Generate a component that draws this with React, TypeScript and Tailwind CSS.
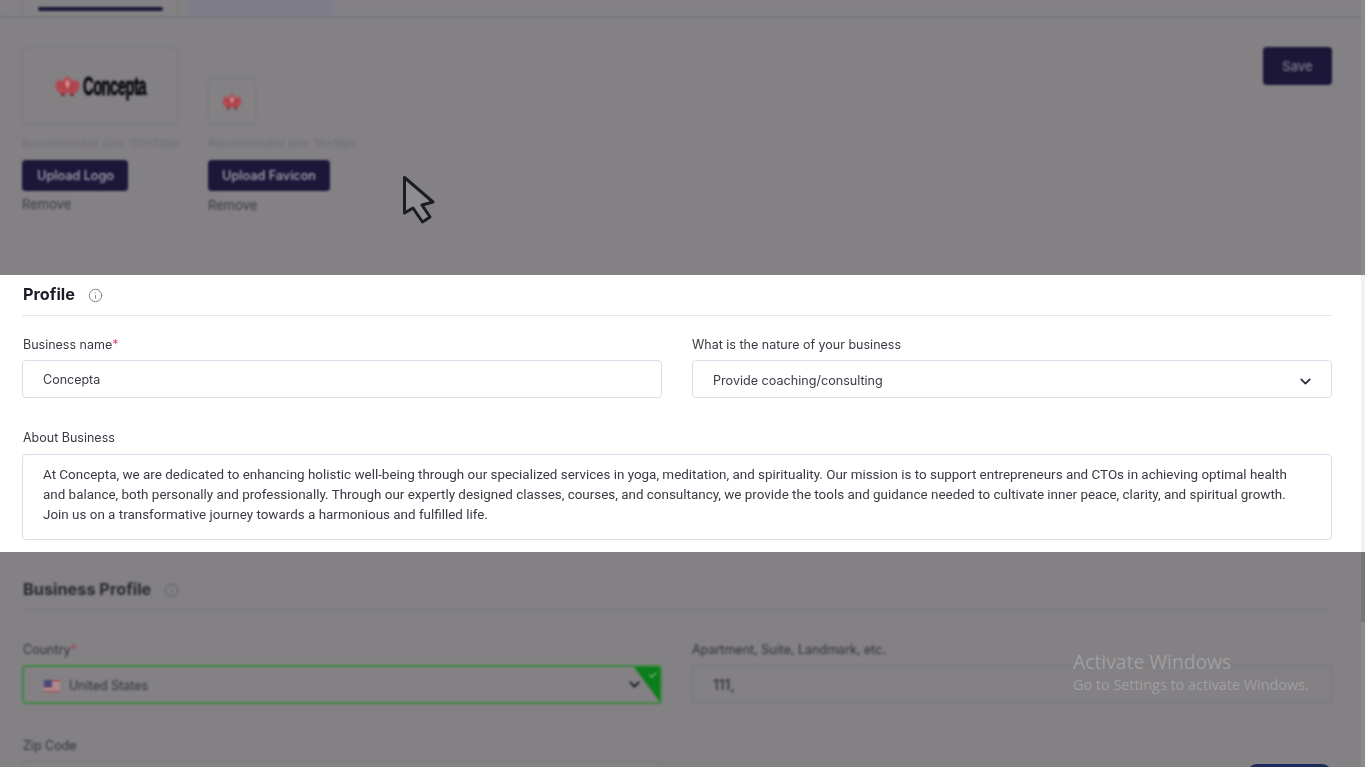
import { Info, ChevronDown, Check } from 'lucide-react'

const DIM = 'bg-[#838184]'

function Lotus({ className }: { className: string }) {
  return (
    <svg className={className} viewBox="0 0 28 24">
      <path d="M14 1 C17 3 18 5 19 7 L24 5 C26 7 27 10 27 13 C26 17 24 19 22 20 L6 20 C4 19 2 17 1 13 C1 10 2 7 4 5 L9 7 C10 5 11 3 14 1 Z" fill="#b4474f" />
      <path d="M14 4 L17 10 L14 15 L11 10 Z" fill="#d98a8e" />
      <path d="M5 10 L11 16 M23 10 L17 16 M8 7 L12 14 M20 7 L16 14" stroke="#8e3a42" strokeWidth="1" />
      <rect x="7" y="20" width="4" height="3" fill="#7a2c33" />
      <rect x="17" y="20" width="4" height="3" fill="#7a2c33" />
    </svg>
  )
}

function DimLabel({ children, star }: { children: string; star?: boolean }) {
  return (
    <div className="text-[12.5px] leading-4 text-[#333238]">
      {children}
      {star && <span className="text-[#a8404f]">*</span>}
    </div>
  )
}

export default function App() {
  return (
    <div className="relative flex h-[767px] w-full flex-col overflow-hidden bg-white font-['Inter',sans-serif]">
      {/* top, dimmed */}
      <section className={`${DIM} h-[275px] shrink-0`}>
        <div className="blur-[1px]">
          <div className="flex h-[18px] gap-[10px] border-b-2 border-[#79777a] pl-[22px]">
            <div className="flex w-[157px] items-end justify-center border-x border-[#79777a] pb-[5px]">
              <div className="h-[4px] w-[125px] rounded-full bg-[#1c1738]" />
            </div>
            <div className="w-[145px] bg-[#7e7e8a]" />
          </div>

          <div className="flex justify-between pl-[22px] pr-[33px] pt-[29px]">
            <div className="flex gap-[29px]">
              <div className="flex w-[157px] flex-col">
                <div className="flex h-[78px] items-center justify-center rounded border border-[#79777a] pr-[2px]">
                  <Lotus className="mr-[2px] h-[22px] w-[27px]" />
                  <div className="w-[63px]">
                    <div className="origin-left font-['Liberation_Sans',sans-serif] text-[26px] leading-none font-bold tracking-[-1px] whitespace-nowrap text-[#0c0b0e] [-webkit-text-stroke:0.8px_#0c0b0e] [transform:scaleX(0.57)]">
                      Concepta
                    </div>
                  </div>
                </div>
                <div className="mt-[12px] text-[10.8px] leading-[14px] whitespace-nowrap text-[#716f72]">
                  Recommended size: 150x50px
                </div>
                <button className="mt-[9px] h-[31px] w-[106px] rounded bg-[#1c1738] pl-[1px] text-[12.7px] font-medium text-[#a9a6b4]">
                  Upload Logo
                </button>
                <div className="mt-[5px] text-[13px] leading-4 text-[#3c3a3f]">Remove</div>
              </div>

              <div className="flex flex-col pt-[31px]">
                <div className="flex h-[47px] w-[48px] items-center justify-center rounded border border-[#79777a]">
                  <Lotus className="h-[17px] w-[20px]" />
                </div>
                <div className="mt-[12px] text-[10.8px] leading-[14px] whitespace-nowrap text-[#716f72]">
                  Recommended size: 16x16px
                </div>
                <button className="mt-[9px] h-[31px] w-[122px] rounded bg-[#1c1738] text-[12.7px] font-medium text-[#a9a6b4]">
                  Upload Favicon
                </button>
                <div className="mt-[6px] text-[13px] leading-4 text-[#3c3a3f]">Remove</div>
              </div>
            </div>

            <button className="h-[38px] w-[69px] rounded bg-[#1c1738] pt-[1px] text-[13px] font-medium text-[#7f7c8c]">
              Save
            </button>
          </div>
        </div>
      </section>

      {/* profile, in focus */}
      <section className="h-[277px] shrink-0 bg-white pl-[22px] pr-[33px]">
        <div className="blur-[0.3px]">
          <div className="flex h-[41px] items-center gap-[14px] border-b border-[#efe4ec] pb-[2px] pl-[1px]">
            <h2 className="text-[16.3px] font-bold text-[#1c1c28]">Profile</h2>
            <Info className="mt-[2px] -ml-[1px] h-[15px] w-[15px] text-[#7d7d84]" strokeWidth={1.5} />
          </div>

          <div className="mt-[21px] grid grid-cols-2 gap-x-[30px]">
            <div>
              <div className="pl-[1px] text-[12.5px] leading-4 text-[#3a3a44]">
                Business name<span className="text-[#e8457a]">*</span>
              </div>
              <div className="mt-[7px] flex h-[38px] items-center rounded border border-[#dedbea] pl-[20px] pt-[3px] text-[12.5px] text-[#3a3a44]">
                Concepta
              </div>
            </div>
            <div>
              <div className="text-[12.5px] leading-4 text-[#3a3a44]">What is the nature of your business</div>
              <div className="mt-[7px] flex h-[38px] items-center justify-between rounded border border-[#dedbea] pl-[20px] pr-[17px] pt-[4px] text-[12.6px] text-[#3a3a44]">
                Provide coaching/consulting
                <ChevronDown className="mt-[1px] h-[17px] w-[17px] text-[#2c2c3a]" strokeWidth={2.5} />
              </div>
            </div>
          </div>

          <div className="mt-[32px] pl-[1px] text-[12.5px] leading-4 text-[#3a3a44]">About Business</div>
          <div className="mt-[8px] h-[86px] rounded border border-[#dedbea] pt-[10px] pl-[20px] font-['Roboto',sans-serif] text-[13.43px] leading-[19.8px] whitespace-nowrap text-[#3a3a44]">
            At Concepta, we are dedicated to enhancing holistic well-being through our specialized services in yoga, meditation, and spirituality. Our mission is to support entrepreneurs and CTOs in achieving optimal health
            <br />
            and balance, both personally and professionally. Through our expertly designed classes, courses, and consultancy, we provide the tools and guidance needed to cultivate inner peace, clarity, and spiritual growth.
            <br />
            Join us on a transformative journey towards a harmonious and fulfilled life.
          </div>
        </div>
      </section>

      {/* business profile, dimmed */}
      <section className={`${DIM} min-h-0 flex-1 pl-[22px] pr-[33px]`}>
        <div className="blur-[1px]">
          <div className="flex h-[59px] items-end gap-[14px] border-b border-[#79777a] pb-[9px] pl-[1px]">
            <h2 className="text-[16.3px] leading-[24px] font-bold text-[#2a2930]">Business Profile</h2>
            <Info className="mb-[3px] -ml-[1px] h-[15px] w-[15px] text-[#5f5d62]" strokeWidth={1.5} />
          </div>

          <div className="mt-[31px] grid grid-cols-2 gap-x-[30px]">
            <div>
              <div className="pl-[1px]">
                <DimLabel star>Country</DimLabel>
              </div>
              <div className="relative mt-[7px] flex h-[39px] items-center overflow-hidden rounded border-2 border-[#3d8a3f] pl-[20px] pt-[3px] text-[12.5px] text-[#333238]">
                <svg className="mr-[9px] h-[12px] w-[16px]" viewBox="0 0 16 12">
                  <rect width="16" height="12" fill="#a8565c" />
                  <rect y="2.5" width="16" height="1.5" fill="#b9b7ba" />
                  <rect y="5.5" width="16" height="1.5" fill="#b9b7ba" />
                  <rect y="8.5" width="16" height="1.5" fill="#b9b7ba" />
                  <rect width="8" height="7" fill="#49497a" />
                </svg>
                United States
                <ChevronDown className="absolute right-[17px] top-[9px] h-[17px] w-[17px] text-[#17161c]" strokeWidth={2.5} />
                <svg className="absolute right-0 top-0 h-[35px] w-[26px]" viewBox="0 0 26 35">
                  <path d="M0 0 H26 V35 Z" fill="#0d7d1c" />
                </svg>
                <Check className="absolute right-[2px] top-[3px] h-[10px] w-[10px] text-[#9cc79f]" strokeWidth={2.5} />
              </div>
            </div>
            <div>
              <DimLabel>Apartment, Suite, Landmark, etc.</DimLabel>
              <div className="mt-[7px] flex h-[38px] items-center rounded border border-[#79777a] pl-[20px] pt-[1px] text-[14px] font-medium text-[#333238]">
                111,
              </div>
            </div>
          </div>

          <div className="mt-[34px] pl-[1px]">
            <DimLabel>Zip Code</DimLabel>
            <div className="-ml-[1px] mt-[6px] h-[38px] w-[640px] rounded border border-[#79777a]" />
          </div>
        </div>
      </section>

      {/* things lying over the page */}
      <div className="absolute right-[33px] top-[764px] h-[20px] w-[85px] rounded-t-[10px] bg-[#1f2a5c] blur-[0.5px]" />

      <div className="absolute right-0 top-0 flex h-full w-[4px] flex-col">
        <div className="h-[275px] bg-[#8b898c]" />
        <div className="h-[277px] bg-[#f1f0f3]" />
        <div className="h-[70px] bg-[#777578]" />
        <div className="flex-1 bg-[#8b898c]" />
      </div>

      <svg className="absolute left-[402px] top-[175px] h-[50px] w-[34px] blur-[0.4px]" viewBox="0 0 34 50">
        <path
          d="M2.5 2.5 L2.5 38 L11 33 L20.5 47 L28 42 L20 30 L31 27 Z"
          fill="#8f8d90"
          stroke="#1d1c20"
          strokeWidth="3"
          strokeLinejoin="round"
        />
      </svg>

      <div className="absolute left-[1073px] top-[649px] font-['Open_Sans',sans-serif] text-[#a09ea1]">
        <div className="text-[19.3px] leading-[25px]">Activate Windows</div>
        <div className="mt-[1px] text-[14.4px] leading-[20px]">Go to Settings to activate Windows.</div>
      </div>
    </div>
  )
}
